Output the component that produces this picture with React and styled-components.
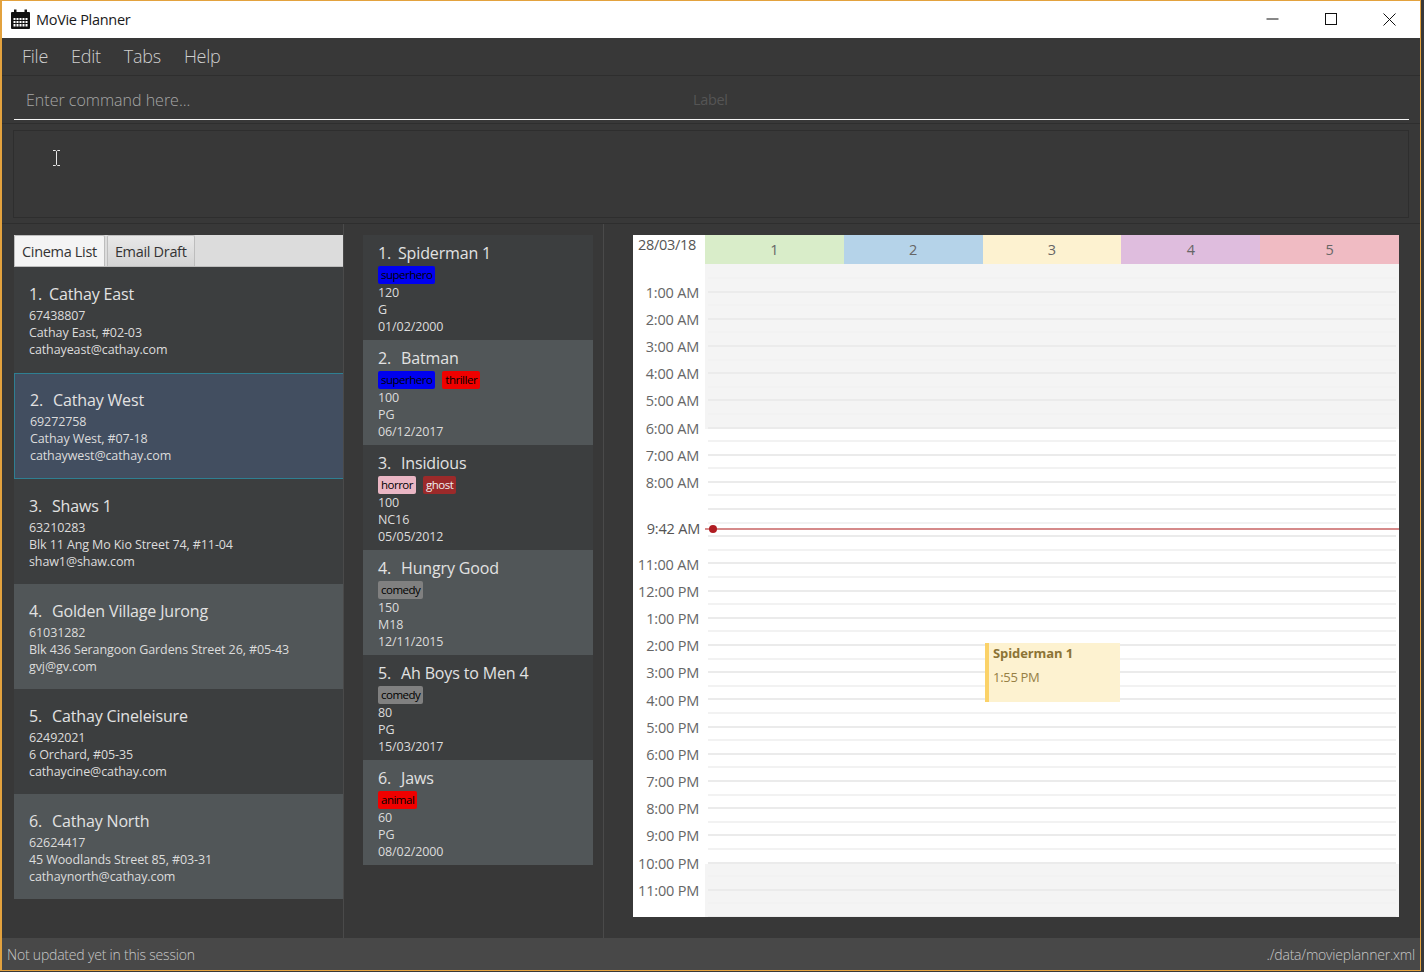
import React from 'react';
import styled, { createGlobalStyle } from 'styled-components';

const GlobalStyle = createGlobalStyle`
  html, body {
    margin: 0;
    padding: 0;
    background: #383838;
    font-family: "Open Sans", "Noto Sans", sans-serif;
    overflow: hidden;
  }
  * { box-sizing: border-box; }
`;

const Window = styled.div`
  width: 1421px;
  height: 971px;
  display: flex;
  flex-direction: column;
  border: 1px solid #e3a23e;
  border-left-width: 2px;
  background: #383838;
`;

const TitleBar = styled.div`
  height: 37px;
  flex: none;
  background: #fff;
  display: flex;
  align-items: center;
  padding: 0 1px 0 8px;
`;

const AppName = styled.span`
  margin-left: 5px;
  font-size: 14.5px;
  letter-spacing: -0.3px;
  color: #1a1a1a;
  flex: 1;
`;

const WinButton = styled.div`
  width: 58.5px;
  height: 37px;
  display: flex;
  align-items: center;
  justify-content: center;
`;

const MenuBar = styled.div`
  height: 38px;
  flex: none;
  display: flex;
  align-items: center;
  gap: 23px;
  padding: 0 0 2px 20px;
  border-bottom: 1px solid #2e2e2e;
`;

const MenuItem = styled.span`
  font-size: 18px;
  font-weight: 300;
  letter-spacing: -0.25px;
  color: #cfcfcf;
`;

const CommandRow = styled.div`
  height: 48px;
  flex: none;
  padding: 0 11px 0 12px;
  border-bottom: 1px solid #2e2e2e;
`;

const CommandField = styled.div`
  height: 44px;
  display: flex;
  align-items: center;
  padding: 5px 0 0 12px;
  border-bottom: 1px solid #f4f4f4;
`;

const Placeholder = styled.span`
  width: 667px;
  font-size: 16px;
  font-weight: 300;
  color: #a6a6a6;
`;

const FieldLabel = styled.span`
  margin-bottom: 2px;
  font-size: 14.5px;
  letter-spacing: -0.35px;
  color: #555;
`;

const ResultRow = styled.div`
  height: 100px;
  flex: none;
  padding: 6px 11px 5px 11px;
  border-bottom: 1px solid #2e2e2e;
`;

const ResultBox = styled.div`
  height: 88px;
  position: relative;
  border: 1px solid #2e2e2e;
  background: #383838;
`;

const Cursor = styled.svg`
  position: absolute;
  left: 38px;
  top: 19px;
`;

const Panes = styled.div`
  flex: 1;
  min-height: 0;
  display: flex;
`;

const CinemaPane = styled.div`
  width: 342px;
  flex: none;
  padding: 11px 0 0 12px;
  border-right: 1px solid #4a4a4a;
`;

const TabStrip = styled.div`
  height: 32px;
  display: flex;
  align-items: stretch;
  gap: 2px;
  background: #dcdcdc;
  border-bottom: 1px solid #bdbdbd;
`;

const Tab = styled.div`
  padding: 0 7px;
  display: flex;
  align-items: center;
  font-size: 14.5px;
  letter-spacing: -0.32px;
  color: #333;
  border: 1px solid #bdbdbd;
  border-bottom: none;
  border-radius: 2px 2px 0 0;
  background: ${({ $active }) => ($active ? '#f4f4f4' : 'linear-gradient(#e8e8e8, #d4d4d4)')};
`;

const CinemaCard = styled.div`
  height: ${({ $tall }) => ($tall ? 106 : 105)}px;
  padding: ${({ $selected }) => ($selected ? 16 : 17)}px 0 0 15px;
  background: ${({ $selected, $odd }) => ($selected ? '#424e60' : $odd ? '#3c3e3f' : '#515658')};
  border: ${({ $selected }) => ($selected ? '1px solid #2f7f92' : 'none')};
  border-right: none;
`;

const MovieCard = styled.div`
  height: 105px;
  padding: 8px 0 0 15px;
  background: ${({ $odd }) => ($odd ? '#3c3e3f' : '#515658')};
`;

const CardTitle = styled.div`
  display: flex;
  font-size: 16px;
  line-height: 21px;
  letter-spacing: -0.15px;
  color: #e2e2e2;
  white-space: pre;
`;

const CardIndex = styled.span`
  width: ${({ $first }) => ($first ? 20 : 23)}px;
  flex: none;
`;

const CardLine = styled.div`
  font-size: 12.5px;
  line-height: 17px;
  letter-spacing: -0.1px;
  color: #dcdcdc;
`;

const Details = styled.div`
  margin-top: 2px;
`;

const MoviePane = styled.div`
  width: 260px;
  flex: none;
  padding: 11px 0 0 19px;
  border-right: 1px solid #4a4a4a;
`;

const MovieList = styled.div`
  width: 230px;
`;

const TagRow = styled.div`
  display: flex;
  gap: 7px;
  margin: 2px 0 0;
`;

const Tag = styled.span`
  height: 18px;
  padding: 0 3px;
  border-radius: 2px;
  font-size: 11.5px;
  line-height: 17px;
  letter-spacing: -0.5px;
  background: ${({ $bg }) => $bg};
  color: ${({ $fg }) => $fg || '#000'};
`;

const CalendarPane = styled.div`
  flex: 1;
  min-width: 0;
  padding: 11px 0 0 29px;
`;

const Calendar = styled.div`
  width: 766px;
  height: 682px;
  position: relative;
  background: #fff;
  display: grid;
  grid-template-columns: 72px 1fr;
  grid-template-rows: 29px 1fr;
`;

const DateCell = styled.div`
  padding: 0 0 0 5px;
  font-size: 14.5px;
  letter-spacing: -0.3px;
  color: #555;
`;

const Days = styled.div`
  display: grid;
  grid-template-columns: repeat(5, 1fr);
`;

const Day = styled.div`
  display: flex;
  align-items: center;
  justify-content: center;
  font-size: 14.5px;
  color: #666;
  background: ${({ $bg }) => $bg};
`;

const TimeColumn = styled.div`
  padding-top: 14.6px;
`;

const TimeLabel = styled.div`
  height: 27.2px;
  display: flex;
  align-items: center;
  justify-content: flex-end;
  padding-right: 6px;
  font-size: 14.5px;
  letter-spacing: -0.2px;
  color: #666;
`;

const Grid = styled.div`
  display: flex;
  flex-direction: column;
  padding-top: 1.4px;
  overflow: hidden;
  background: #f4f4f4;
`;

const Slot = styled.div`
  height: 13.6px;
  flex: none;
  display: flex;
  align-items: flex-end;
  padding: 0 3px;
  background: ${({ $off }) => ($off ? '#f4f4f4' : '#fff')};
`;

const SlotLine = styled.div`
  width: 100%;
  height: 2px;
  background: ${({ $hour }) => ($hour ? '#ebebeb' : '#f2f2f2')};
`;

const NowLabel = styled.div`
  position: absolute;
  left: 0;
  top: 283px;
  width: 72px;
  height: 20px;
  display: flex;
  align-items: center;
  justify-content: flex-end;
  padding-right: 5px;
  font-size: 14.5px;
  letter-spacing: -0.2px;
  color: #555;
`;

const NowLine = styled.div`
  position: absolute;
  left: 72px;
  right: 0;
  top: 293px;
  height: 2px;
  background: #d58a8a;
`;

const NowDot = styled.div`
  position: absolute;
  left: 76px;
  top: 290px;
  width: 8px;
  height: 8px;
  border-radius: 50%;
  background: #b01c22;
`;

const Event = styled.div`
  position: absolute;
  left: 352px;
  top: 408px;
  width: 135px;
  height: 59px;
  padding: 1px 0 0 4px;
  border-left: 4px solid #fbd268;
  background: #fdf2d0;
  color: #8c7435;
`;

const EventTitle = styled.div`
  font-size: 13px;
  font-weight: 700;
  line-height: 18px;
  letter-spacing: -0.1px;
`;

const EventTime = styled.div`
  margin-top: 6px;
  font-size: 13px;
  line-height: 18px;
  letter-spacing: -0.3px;
  opacity: 0.9;
`;

const StatusBar = styled.div`
  height: 32px;
  flex: none;
  display: flex;
  align-items: center;
  justify-content: space-between;
  padding: 0 5px;
  background: #484848;
`;

const StatusText = styled.span`
  font-size: 14px;
  font-weight: 300;
  letter-spacing: -0.2px;
  color: #c8c8c8;
`;

const CalendarIcon = () => (
  <svg width="21" height="21" viewBox="0 0 21 21">
    <path d="M1 4a1 1 0 0 1 1-1h17a1 1 0 0 1 1 1v15a1 1 0 0 1-1 1H2a1 1 0 0 1-1-1z" fill="#111" />
    <rect x="4" y="0.5" width="2.5" height="4" fill="#111" />
    <rect x="14.5" y="0.5" width="2.5" height="4" fill="#111" />
    <path
      d="M3 8.5h15v9.5H3z M3 11.5h15 M3 14.5h15 M6 8.5v9.5 M9 8.5v9.5 M12 8.5v9.5 M15 8.5v9.5"
      fill="#fff"
      stroke="#111"
      strokeWidth="1"
    />
  </svg>
);

const cinemas = [
  { name: 'Cathay East', phone: '67438807', address: 'Cathay East, #02-03', email: 'cathayeast@cathay.com' },
  { name: 'Cathay West', phone: '69272758', address: 'Cathay West, #07-18', email: 'cathaywest@cathay.com' },
  { name: 'Shaws 1', phone: '63210283', address: 'Blk 11 Ang Mo Kio Street 74, #11-04', email: 'shaw1@shaw.com' },
  { name: 'Golden Village Jurong', phone: '61031282', address: 'Blk 436 Serangoon Gardens Street 26, #05-43', email: 'gvj@gv.com' },
  { name: 'Cathay Cineleisure', phone: '62492021', address: '6 Orchard, #05-35', email: 'cathaycine@cathay.com' },
  { name: 'Cathay North', phone: '62624417', address: '45 Woodlands Street 85, #03-31', email: 'cathaynorth@cathay.com' },
];

const BLUE = '#0000f0';
const RED = '#f00000';
const GREY = '#808080';

const movies = [
  { name: 'Spiderman 1', tags: [['superhero', BLUE]], mins: '120', rating: 'G', date: '01/02/2000' },
  { name: 'Batman', tags: [['superhero', BLUE], ['thriller', RED]], mins: '100', rating: 'PG', date: '06/12/2017' },
  { name: 'Insidious', tags: [['horror', '#eab6c4'], ['ghost', '#9c2a2a', '#eee']], mins: '100', rating: 'NC16', date: '05/05/2012' },
  { name: 'Hungry Good', tags: [['comedy', GREY]], mins: '150', rating: 'M18', date: '12/11/2015' },
  { name: 'Ah Boys to Men 4', tags: [['comedy', GREY]], mins: '80', rating: 'PG', date: '15/03/2017' },
  { name: 'Jaws', tags: [['animal', RED]], mins: '60', rating: 'PG', date: '08/02/2000' },
];

const days = [
  ['1', '#d9edc9'],
  ['2', '#b5d3e9'],
  ['3', '#fdf2d0'],
  ['4', '#dfbdde'],
  ['5', '#f0bbc3'],
];

const hourName = (h) => `${h % 12 === 0 ? 12 : h % 12}:00 ${h < 12 ? 'AM' : 'PM'}`;
const hours = Array.from({ length: 23 }, (_, i) => i + 1);
const slots = Array.from({ length: 48 }, (_, i) => i);

function App() {
  return (
    <>
      <GlobalStyle />
      <Window>
        <TitleBar>
          <CalendarIcon />
          <AppName>MoVie Planner</AppName>
          <WinButton>
            <svg width="13" height="13" viewBox="0 0 13 13"><path d="M0.5 6h12" stroke="#111" /></svg>
          </WinButton>
          <WinButton>
            <svg width="13" height="13" viewBox="0 0 13 13"><rect x="0.5" y="0.5" width="11" height="11" fill="none" stroke="#111" /></svg>
          </WinButton>
          <WinButton>
            <svg width="13" height="13" viewBox="0 0 13 13"><path d="M0.5 0.5l12 12M12.5 0.5l-12 12" stroke="#111" /></svg>
          </WinButton>
        </TitleBar>

        <MenuBar>
          <MenuItem>File</MenuItem>
          <MenuItem>Edit</MenuItem>
          <MenuItem>Tabs</MenuItem>
          <MenuItem>Help</MenuItem>
        </MenuBar>

        <CommandRow>
          <CommandField>
            <Placeholder>Enter command here...</Placeholder>
            <FieldLabel>Label</FieldLabel>
          </CommandField>
        </CommandRow>

        <ResultRow>
          <ResultBox>
            <Cursor width="9" height="16" viewBox="0 0 9 16">
              <path d="M1 0.5h2.5L4.5 1.5L5.5 0.5h2.5M4.5 1.5v13M1 15.5h2.5L4.5 14.5L5.5 15.5h2.5" fill="none" stroke="#e8e8e8" />
            </Cursor>
          </ResultBox>
        </ResultRow>

        <Panes>
          <CinemaPane>
            <TabStrip>
              <Tab $active>Cinema List</Tab>
              <Tab>Email Draft</Tab>
            </TabStrip>
            {cinemas.map((c, i) => (
              <CinemaCard key={c.name} $odd={i % 2 === 0} $selected={i === 1} $tall={i < 2}>
                <CardTitle>
                  <CardIndex $first={i === 0}>{i + 1}.</CardIndex>
                  {c.name}
                </CardTitle>
                <Details>
                  <CardLine>{c.phone}</CardLine>
                  <CardLine>{c.address}</CardLine>
                  <CardLine>{c.email}</CardLine>
                </Details>
              </CinemaCard>
            ))}
          </CinemaPane>

          <MoviePane>
            <MovieList>
              {movies.map((m, i) => (
                <MovieCard key={m.name} $odd={i % 2 === 0}>
                  <CardTitle>
                    <CardIndex $first={i === 0}>{i + 1}.</CardIndex>
                    {m.name}
                  </CardTitle>
                  <TagRow>
                    {m.tags.map(([label, bg, fg]) => (
                      <Tag key={label} $bg={bg} $fg={fg}>{label}</Tag>
                    ))}
                  </TagRow>
                  <CardLine>{m.mins}</CardLine>
                  <CardLine>{m.rating}</CardLine>
                  <CardLine>{m.date}</CardLine>
                </MovieCard>
              ))}
            </MovieList>
          </MoviePane>

          <CalendarPane>
            <Calendar>
              <DateCell>28/03/18</DateCell>
              <Days>
                {days.map(([label, bg]) => (
                  <Day key={label} $bg={bg}>{label}</Day>
                ))}
              </Days>
              <TimeColumn>
                {hours.map((h) => (
                  <TimeLabel key={h}>{h === 9 || h === 10 ? '' : hourName(h)}</TimeLabel>
                ))}
              </TimeColumn>
              <Grid>
                {slots.map((s) => (
                  <Slot key={s} $off={s < 12 || s >= 44}>
                    <SlotLine $hour={s % 2 === 1} />
                  </Slot>
                ))}
              </Grid>
              <NowLabel>9:42 AM</NowLabel>
              <NowLine />
              <NowDot />
              <Event>
                <EventTitle>Spiderman 1</EventTitle>
                <EventTime>1:55 PM</EventTime>
              </Event>
            </Calendar>
          </CalendarPane>
        </Panes>

        <StatusBar>
          <StatusText>Not updated yet in this session</StatusText>
          <StatusText>./data/movieplanner.xml</StatusText>
        </StatusBar>
      </Window>
    </>
  );
}

export default App;
